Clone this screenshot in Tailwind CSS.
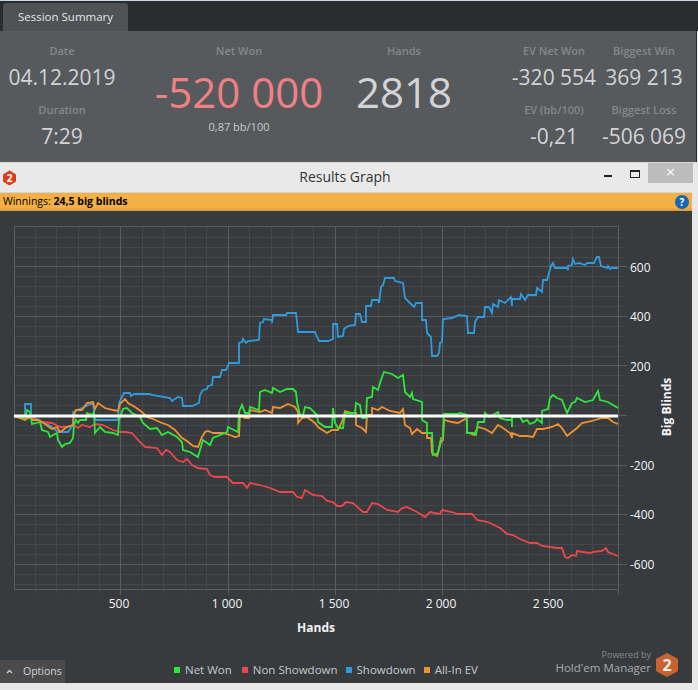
<!DOCTYPE html>
<html lang="en">
<head>
    <meta charset="UTF-8">
    <title>Session Summary</title>
    <script src="https://cdn.jsdelivr.net/npm/@tailwindcss/browser@4"></script>
</head>
<body class="bg-[#e8e8e8] w-[698px] h-[690px] overflow-hidden font-['Open_Sans',sans-serif]">
    <!-- session summary -->
    <div class="h-[1px] bg-[#cdd8e6]"></div>
    <div class="h-[30px] bg-[#2a2d30] pt-[2px] pl-[3px]">
        <div class="w-[125px] h-[28px] rounded-t-[3px] bg-[#4f5356] text-[#e4e4e4] text-[11.5px] flex items-center justify-center">Session Summary</div>
    </div>
    <div class="h-[131px] w-[697px] bg-[#575a5d] flex text-center border-r border-[#2a2d30]">
        <div class="w-[124px] flex flex-col items-center">
            <div class="mt-[12px] text-[11px] leading-[16px] font-semibold text-[#85888b]">Date</div>
            <div class="mt-[2px] text-[21px] leading-[32px] text-[#d2d3d4]">04.12.2019</div>
            <div class="mt-[9px] text-[11px] leading-[16px] font-semibold text-[#85888b]">Duration</div>
            <div class="mt-[2px] text-[21px] leading-[32px] text-[#d2d3d4]">7:29</div>
        </div>
        <div class="w-[230px] flex flex-col items-center">
            <div class="mt-[12px] text-[11px] leading-[16px] font-semibold text-[#85888b]">Net Won</div>
            <div class="mt-[8px] text-[42px] leading-[50px] text-[#f08083]">-520 000</div>
            <div class="mt-[2px] text-[11px] leading-[16px] text-[#c8c9ca]">0,87 bb/100</div>
        </div>
        <div class="w-[100px] flex flex-col items-center">
            <div class="mt-[12px] text-[11px] leading-[16px] font-semibold text-[#85888b]">Hands</div>
            <div class="mt-[8px] text-[42px] leading-[50px] text-[#d2d3d4]">2818</div>
        </div>
        <div class="w-[46px]"></div>
        <div class="w-[108px] flex flex-col items-center">
            <div class="mt-[12px] text-[11px] leading-[16px] font-semibold text-[#85888b]">EV Net Won</div>
            <div class="mt-[2px] text-[21px] leading-[32px] text-[#d2d3d4]">-320 554</div>
            <div class="mt-[9px] text-[11px] leading-[16px] font-semibold text-[#85888b]">EV (bb/100)</div>
            <div class="mt-[2px] text-[21px] leading-[32px] text-[#d2d3d4]">-0,21</div>
        </div>
        <div class="w-[72px] flex flex-col items-center whitespace-nowrap">
            <div class="mt-[12px] text-[11px] leading-[16px] font-semibold text-[#85888b]">Biggest Win</div>
            <div class="mt-[2px] text-[21px] leading-[32px] text-[#d2d3d4]">369 213</div>
            <div class="mt-[9px] text-[11px] leading-[16px] font-semibold text-[#85888b]">Biggest Loss</div>
            <div class="mt-[2px] text-[21px] leading-[32px] text-[#d2d3d4]">-506 069</div>
        </div>
    </div>

    <!-- window title bar -->
    <div class="h-[30px] bg-[#e9e9e9] border-t border-[#d8d8d8] relative flex items-center justify-between pl-[2px] pr-[5px]">
        <svg width="15" height="16" viewBox="0 0 15 16" class="block">
            <path d="M7.5 1 L13.5 4.5 V11.5 L7.5 15 L1.5 11.5 V4.5 Z" class="fill-[#d8401c] stroke-[#d8401c]" stroke-linejoin="round"/>
            <text x="7.5" y="12" text-anchor="middle" class="fill-white text-[10px] font-bold">2</text>
        </svg>
        <div class="absolute left-0 right-[8px] top-[3px] text-center text-[14px] leading-[22px] text-[#333]">Results Graph</div>
        <div class="flex items-start h-full">
            <div class="w-[8px] h-[2px] bg-[#222] mt-[12px] mr-[18px]"></div>
            <div class="w-[10px] h-[8px] border border-t-2 border-[#222] mt-[7px] mr-[8px]"></div>
            <div class="w-[45px] h-[20px] bg-[#bcbcbc] text-white text-[16px] leading-[19px] text-center">×</div>
        </div>
    </div>

    <!-- graph panel -->
    <div class="w-[692px] h-[491px] flex flex-col bg-[#383b3e]">
        <div class="h-[19px] border-t border-[#d4d4d4] bg-gradient-to-b from-[#f5b045] from-80% to-[#d69a3c] flex items-center justify-between px-[3px] text-[10.5px] text-black">
            <div>Winnings: <span class="font-bold">24,5 big blinds</span></div>
            <div class="w-[14px] h-[14px] rounded-full bg-[#1667b0] text-white text-[10px] leading-[14px] font-bold text-center">?</div>
        </div>
        <svg width="692" height="430" viewBox="0 211 692 430" class="block">
            <path fill="none" class="stroke-[#45484b]" d="M35.5 226V593M56.5 226V593M78.5 226V593M99.5 226V593M142.5 226V593M163.5 226V593M185.5 226V593M206.5 226V593M249.5 226V593M271.5 226V593M292.5 226V593M313.5 226V593M356.5 226V593M378.5 226V593M399.5 226V593M421.5 226V593M464.5 226V593M485.5 226V593M506.5 226V593M528.5 226V593M571.5 226V593M592.5 226V593M14 237.5H623M14 247.5H623M14 257.5H623M14 276.5H623M14 286.5H623M14 296.5H623M14 306.5H623M14 326.5H623M14 336.5H623M14 346.5H623M14 356.5H623M14 375.5H623M14 385.5H623M14 395.5H623M14 405.5H623M14 425.5H623M14 435.5H623M14 445.5H623M14 455.5H623M14 475.5H623M14 485.5H623M14 495.5H623M14 505.5H623M14 524.5H623M14 534.5H623M14 544.5H623M14 554.5H623M14 574.5H623M14 584.5H623"/>
            <path fill="none" class="stroke-[#5a5d60]" d="M14.5 226V590M120.5 226V595M228.5 226V595M335.5 226V595M442.5 226V595M549.5 226V595M618.5 226V595M14 226.5H619M14 589.5H619M14 266.5H627M14 316.5H627M14 365.5H627M14 415.5H627M14 465.5H627M14 514.5H627M14 564.5H627"/>

            <polyline fill="none" stroke-width="1.8" class="stroke-[#2f9bdc]" points="14,416 25,416 25,404 31,404 31,415 35,418 41,421 52,427 58,432 68,432 73,425 73,412 93,403 95,420 118,420 119,403 124,393 130,393 131,396 134,394 150,394 152,395 170,398 172,401 178,397 182,398 183,406 192,406 199,403 200,395 203,390 207,389 208,386 212,385 213,377 220,377 222,370 226,370 227,368 229,363 239,363 239,343 242,342 243,339 246,343 248,341 259,340 260,323 263,322 264,319 272,320 272,323 273,315 286,315 287,313 296,313 297,322 298,332 315,332 317,337 319,341 328,341 333,339 333,324 337,324 338,337 343,336 344,329 348,326 355,325 356,314 360,314 362,322 366,322 366,306 371,306 372,300 378,300 379,303 381,287 383,285 385,278 394,278 395,281 403,283 405,298 410,303 414,307 416,303 422,303 422,320 426,320 427,333 431,337 432,356 437,356 439,353 440,343 442,342 443,319 452,318 459,315 467,316 468,333 474,333 475,322 478,317 484,317 485,307 489,307 492,313 493,304 498,307 499,300 505,303 511,297 512,306 512,299 520,299 521,294 525,300 528,295 536,295 537,288 542,292 543,280 547,280 551,266 553,263 555,268 567,268 568,270 568,266 572,265 573,259 575,264 579,263 585,265 587,263 594,263 597,257 599,257 601,266 607,268 608,266 610,269 612,268 617,268 617,269"/>

            <polyline fill="none" stroke-width="1.8" class="stroke-[#e8474c]" points="14,416 20,418 33,418 43,422 52,423 60,427 67,427 73,425 78,428 82,425 90,427 95,424 103,425 113,430 120,432 125,432 132,433 138,440 145,447 157,448 162,455 166,450 170,452 177,460 183,462 187,459 192,465 198,468 207,469 210,475 215,477 227,477 233,483 243,483 247,488 250,483 260,485 270,488 280,492 293,492 297,497 302,498 305,490 313,495 322,496 327,501 333,502 337,506 342,506 346,502 353,503 363,512 367,512 372,503 378,504 387,510 398,512 402,508 407,507 417,512 425,517 430,512 440,514 442,510 452,512 458,514 472,514 477,520 488,522 500,528 507,534 513,535 520,539 530,543 537,543 542,546 557,548 562,548 565,557 568,558 572,555 576,556 577,551 583,552 590,553 593,552 602,551 606,548 608,552 618,556"/>

            <polyline fill="none" stroke-width="1.8" class="stroke-[#f0912f]" points="14,416 25,420 30,417 32,420 38,420 45,424 52,429 57,427 60,432 67,427 73,425 74,415 76,410 82,410 87,403 93,402 95,409 98,403 105,408 113,410 118,411 120,404 125,399 128,403 135,407 142,412 147,417 153,419 162,423 168,425 175,430 182,438 187,441 193,446 198,447 202,437 205,432 208,431 213,433 223,433 230,435 235,437 239,436 240,415 245,418 249,418 250,410 260,412 265,410 272,413 273,407 280,408 288,404 295,407 298,412 298,423 302,418 307,417 315,423 318,427 327,433 332,430 338,430 342,422 345,411 352,413 356,413 356,425 362,428 366,432 367,415 372,415 372,408 378,410 382,407 390,411 400,413 403,409 405,425 410,428 412,434 417,429 422,433 427,433 427,438 431,438 432,453 437,456 441,442 443,440 444,420 452,422 458,423 465,419 467,420 467,432 474,435 478,427 485,429 492,433 498,425 503,428 510,433 512,438 512,433 520,436 527,436 533,437 537,429 543,429 552,427 558,424 562,428 567,436 572,432 577,428 582,423 592,421 602,418 608,418 613,422 618,424"/>

            <polyline fill="none" stroke-width="1.8" class="stroke-[#2ee63a]" points="14,416 25,418 27,410 30,412 32,424 40,422 42,430 48,432 50,437 53,435 57,433 58,440 62,447 65,444 70,443 73,438 74,425 76,420 78,423 80,420 86,420 87,413 92,415 94,412 95,433 100,427 105,432 113,433 118,435 119,420 123,409 127,408 132,413 140,417 143,423 150,429 157,428 162,435 168,432 177,437 182,442 183,450 190,452 198,457 200,450 203,440 210,445 213,438 220,435 227,432 228,427 238,432 239,412 242,405 245,413 249,413 250,407 259,410 260,392 265,390 272,393 273,388 280,392 287,389 293,389 296,392 297,402 300,415 303,415 305,407 310,408 317,415 318,422 325,427 332,427 333,408 335,423 338,428 343,428 345,413 355,413 356,403 360,405 362,418 366,418 367,398 372,397 373,387 378,390 381,380 384,372 392,374 398,378 403,375 405,392 410,397 412,393 413,399 422,402 422,420 427,423 427,433 432,433 433,455 438,453 441,438 443,437 444,414 458,414 460,413 467,415 467,433 473,433 476,435 478,422 484,422 485,413 489,417 493,415 498,412 500,418 507,420 512,420 512,427 512,417 520,417 523,422 527,420 530,424 535,422 537,419 542,423 542,411 548,409 550,398 553,395 557,398 562,400 567,413 572,403 575,402 577,398 585,402 593,400 598,391 600,400 608,402 618,408"/>

            <path d="M14 416H618" fill="none" stroke-width="3" class="stroke-white"/>

            <g class="fill-[#f2f4f6] text-[12px]" text-anchor="middle">
                <text x="119" y="608">500</text>
                <text x="227" y="608">1 000</text>
                <text x="334" y="608">1 500</text>
                <text x="441" y="608">2 000</text>
                <text x="548" y="608">2 500</text>
            </g>
            <g class="fill-[#f2f4f6] text-[12px]">
                <text x="630" y="272">600</text>
                <text x="630" y="321">400</text>
                <text x="630" y="371">200</text>
                <text x="630" y="470">-200</text>
                <text x="630" y="519">-400</text>
                <text x="630" y="569">-600</text>
            </g>
            <text x="316" y="632" text-anchor="middle" class="fill-[#f2f4f6] text-[12px] font-bold">Hands</text>
            <text transform="translate(671 407) rotate(-90)" text-anchor="middle" class="fill-[#f2f4f6] text-[12px] font-bold">Big Blinds</text>
        </svg>
        <!-- footer row -->
        <div class="relative flex-1 flex items-end justify-between">
            <div class="w-[65px] h-[23px] bg-[#4b4b4b] text-[#cfd1d3] text-[10.5px] flex items-center pl-[6px] gap-[10px]">
                <svg width="7" height="5" viewBox="0 0 7 5"><path d="M1 4L3.5 1.5L6 4" fill="none" stroke-width="1.3" class="stroke-[#cfd1d3]"/></svg>
                <span>Options</span>
            </div>
            <div class="absolute left-[174px] top-[20px] flex items-center text-[11.5px] leading-[18px] text-[#c4c8cc]">
                <div class="w-[6px] h-[6px] bg-[#2ee63a] mr-[5px]"></div><span class="mr-[10px]">Net Won</span>
                <div class="w-[6px] h-[6px] bg-[#e8474c] mr-[5px]"></div><span class="mr-[8px]">Non Showdown</span>
                <div class="w-[6px] h-[6px] bg-[#2f9bdc] mr-[5px]"></div><span class="mr-[8px]">Showdown</span>
                <div class="w-[6px] h-[6px] bg-[#f0912f] mr-[5px]"></div><span>All-In EV</span>
            </div>
            <div class="flex items-center gap-[4px] pr-[13px] pb-[3px]">
                <div class="text-right mb-[5px]">
                    <div class="text-[9px] leading-[12px] text-[#85888b]">Powered by</div>
                    <div class="text-[11.5px] leading-[14px] text-[#a8abae]">Hold'em Manager</div>
                </div>
                <svg width="24" height="26" viewBox="0 0 24 26" class="block">
                    <path d="M12 1.5 L22.5 7 V19 L12 24.5 L1.5 19 V7 Z" class="fill-[#c8622f] stroke-[#c8622f]" stroke-linejoin="round"/>
                    <text x="12" y="18.5" text-anchor="middle" class="fill-[#f0f0f0] text-[16px] font-bold">2</text>
                </svg>
            </div>
        </div>
    </div>
</body>
</html>
